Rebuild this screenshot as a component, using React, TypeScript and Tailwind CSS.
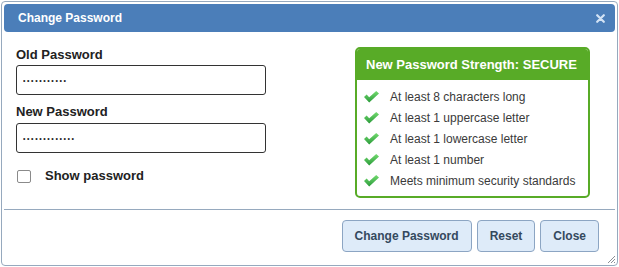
import React from "react";

const Check = () => (
  <svg width="15" height="12" viewBox="0 0 15 12" className="shrink-0">
    <defs>
      <linearGradient id="cg" x1="0" y1="0" x2="0" y2="1">
        <stop offset="0" stopColor="#74dc70" />
        <stop offset="1" stopColor="#2a9a3a" />
      </linearGradient>
    </defs>
    <polygon points="0,6 2.6,3.6 5.2,6.2 12.2,0 15,2.6 5.2,11.6" fill="url(#cg)" />
  </svg>
);

const rules = [
  "At least 8 characters long",
  "At least 1 uppercase letter",
  "At least 1 lowercase letter",
  "At least 1 number",
  "Meets minimum security standards",
];

export default function App() {
  return (
    <div className="w-[619px] h-[267px] bg-white font-['Liberation_Sans',Arial,sans-serif] pt-[1px] pl-[1px]">
      <div className="relative w-[617px] h-[265px] border border-[#96a9be] rounded-[4px] p-[2px] flex flex-col bg-white">
        {/* Title bar */}
        <div className="h-[28px] shrink-0 bg-[#4b7eb9] rounded-[4px] flex items-center justify-between pl-[14px] pr-[10px]">
          <span className="text-white text-[12px] font-bold leading-none">Change Password</span>
          <svg width="9" height="9" viewBox="0 0 9 9">
            <path d="M1.2 1.2 L7.8 7.8 M7.8 1.2 L1.2 7.8" stroke="#d3e3f5" strokeWidth="2.2" strokeLinecap="round" />
          </svg>
        </div>

        {/* Content */}
        <div className="h-[177px] shrink-0 flex pl-[12px]">
          <div className="flex flex-col pt-[15px] w-[250px]">
            <label className="h-[16px] leading-[16px] text-[13px] font-bold text-[#222]">Old Password</label>
            <input
              type="password"
              readOnly
              value="xxxxxxxxxxx"
              className="mt-[2px] h-[30px] w-[250px] border border-[#333] rounded-[3px] px-[6px] text-[7px] tracking-[1.6px] text-[#222] outline-none"
            />
            <label className="mt-[9px] h-[16px] leading-[16px] text-[13px] font-bold text-[#222]">New Password</label>
            <input
              type="password"
              readOnly
              value="xxxxxxxxxxxxx"
              className="mt-[3px] h-[30px] w-[250px] border border-[#333] rounded-[3px] px-[6px] text-[7px] tracking-[1.6px] text-[#222] outline-none"
            />
            <div className="mt-[15px] h-[16px] flex items-center">
              <input
                type="checkbox"
                className="appearance-none ml-[1px] w-[14px] h-[13px] border border-[#8a8a8a] rounded-[2px] bg-white"
              />
              <span className="ml-[14px] text-[13px] font-bold text-[#222] leading-[16px]">Show password</span>
            </div>
          </div>

          <div className="ml-auto mr-[25px] mt-[15px] w-[235px] h-[151px] border-2 border-[#58ab27] rounded-[5px] overflow-hidden flex flex-col">
            <div className="h-[31px] shrink-0 bg-[#58ab27] flex items-center pl-[9px]">
              <span className="text-white text-[13px] font-bold leading-none">New Password Strength: SECURE</span>
            </div>
            <div className="flex flex-col pt-[6px] pl-[7px]">
              {rules.map((r) => (
                <div key={r} className="h-[21px] flex items-center">
                  <Check />
                  <span className="ml-[11px] text-[12px] text-[#3a3a3a] leading-none">{r}</span>
                </div>
              ))}
            </div>
          </div>
        </div>

        {/* Button pane */}
        <div className="flex-1 border-t border-[#96a9be] flex justify-end items-start pt-[10px] pr-[16px] gap-[5px]">
          {["Change Password", "Reset", "Close"].map((b) => (
            <button
              key={b}
              className="h-[32px] px-[12px] bg-[#deebf9] border border-[#8ca5c3] rounded-[4px] text-[12px] font-bold text-[#34495e]"
            >
              {b}
            </button>
          ))}
        </div>

        {/* Resize handle */}
        <svg className="absolute right-[1px] bottom-[1px]" width="10" height="10" viewBox="0 0 10 10">
          <path d="M9 2 L2 9 M9 5 L5 9 M9 8 L8 9" stroke="#8a8f96" strokeWidth="1" />
        </svg>
      </div>
    </div>
  );
}
